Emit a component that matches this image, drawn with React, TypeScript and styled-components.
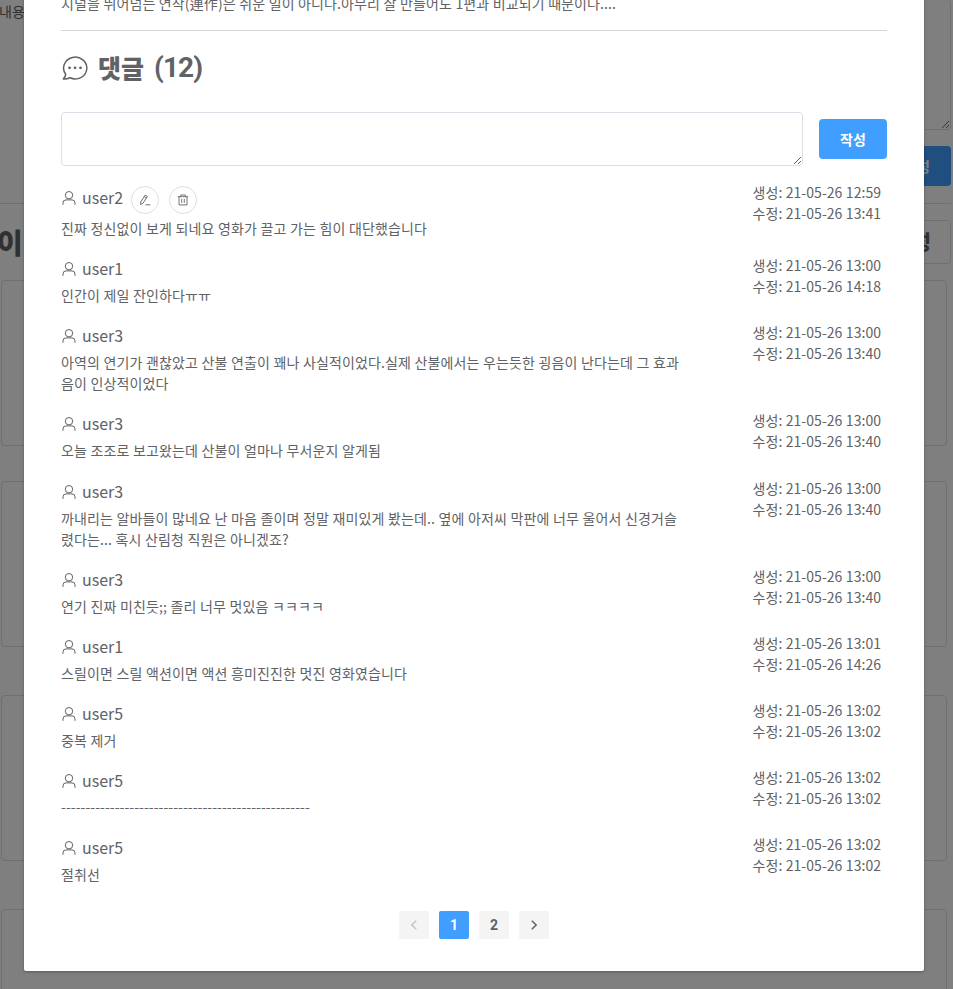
import React from 'react';
import styled, { createGlobalStyle } from 'styled-components';

const GlobalStyle = createGlobalStyle`
  * { box-sizing: border-box; }
  html, body { margin: 0; overflow: hidden; }
  body {
    font-family: "Noto Sans CJK KR", "Noto Sans KR", sans-serif;
    font-size: 14px;
    line-height: 21px;
    color: #606266;
    background: #fff;
  }
`;

const Screen = styled.div`
  position: relative;
  height: 989px;
  overflow: hidden;
`;

/* ---- page behind the dialog ---- */
const BackPage = styled.div`
  display: flex;
  flex-direction: column;
  height: 989px;
  overflow: hidden;
  padding-right: 2px;
`;
const BackField = styled.div`
  display: flex;
  height: 130px;
`;
const BackLabel = styled.span`
  width: 60px;
  flex: none;
  padding-top: 1px;
  margin-left: -1px;
`;
const BackTextarea = styled.textarea`
  flex: 1;
  height: 130px;
  border: 1px solid #dcdfe6;
  border-top: 0;
  border-radius: 4px;
  background: #fff;
  resize: vertical;
`;
const BackActions = styled.div`
  display: flex;
  justify-content: flex-end;
  padding: 16px 0 17px;
  border-bottom: 1px solid #dcdfe6;
  height: 74px;
`;
const Button = styled.button`
  width: 68px;
  height: 40px;
  flex: none;
  padding: 0;
  border: 0;
  border-radius: 4px;
  background: #409eff;
  color: #fff;
  font: 700 14px/20px "Noto Sans CJK KR", sans-serif;
`;
const BackHeading = styled.div`
  display: flex;
  justify-content: space-between;
  align-items: center;
  height: 44px;
  margin: 16px 0;
  font-size: 28px;
  font-weight: 900;
  white-space: nowrap;
`;
const BackTitle = styled.span`
  margin-left: -3px;
`;
const BackChoice = styled.span`
  height: 44px;
  width: 90px;
  padding-right: 19px;
  border: 1px solid #dcdfe6;
  border-radius: 4px;
  text-align: right;
  font-size: 20px;
  line-height: 42px;
`;
const BackCard = styled.div<{ $gap: number }>`
  flex: none;
  height: 166px;
  margin: 0 4px ${(p) => p.$gap}px 1px;
  border: 1px solid #dcdfe6;
  border-radius: 4px;
`;

/* ---- dialog ---- */
const Overlay = styled.div`
  position: absolute;
  inset: 0;
  background: rgba(0, 0, 0, 0.5);
  overflow: hidden;
`;
const Dialog = styled.section`
  width: 900px;
  height: 1011px;
  margin: -40px 0 0 24px;
  padding: 33px 37px 0;
  background: #fff;
  border-radius: 2px;
  box-shadow: 0 1px 3px rgba(0, 0, 0, 0.3);
`;
const Synopsis = styled.p`
  margin: 0;
  height: 38px;
  border-bottom: 1px solid #d6d6d6;
  letter-spacing: 0.11px;
  word-spacing: 0.22px;
`;
const Heading = styled.h2`
  display: flex;
  align-items: center;
  height: 36px;
  margin: 19px 0 26px;
  font-size: 25px;
  font-weight: 900;
`;
const HeadingText = styled.span`
  margin: -2px 10px 0 10px;
`;
const Count = styled.span`
  font: 700 28px/36px Roboto, sans-serif;
  letter-spacing: -0.9px;
`;
const Composer = styled.div`
  display: flex;
  align-items: center;
  gap: 16px;
  height: 54px;
`;
const CommentInput = styled.textarea`
  flex: 1;
  height: 54px;
  border: 1px solid #dcdfe6;
  border-radius: 4px;
  resize: vertical;
`;
const CommentList = styled.div`
  display: flex;
  flex-direction: column;
  padding-top: 16px;
`;
const Row = styled.article<{ $pad: number }>`
  display: flex;
  justify-content: space-between;
  padding-right: 6px;
  padding-bottom: ${(p) => p.$pad}px;
`;
const Body = styled.div`
  width: 625px;
`;
const Author = styled.div<{ $own: boolean }>`
  display: flex;
  align-items: center;
  height: ${(p) => (p.$own ? 32 : 26)}px;
  margin-bottom: 4px;
  padding-top: ${(p) => (p.$own ? 0 : 1)}px;
  font-size: 16px;
`;
const Name = styled.span<{ $own: boolean }>`
  margin: ${(p) => (p.$own ? '-2px' : '0')} 8px 0 5px;
`;
const RoundButton = styled.button`
  display: flex;
  align-items: center;
  justify-content: center;
  width: 28px;
  height: 28px;
  margin: 4px 10px 0 0;
  padding: 0;
  border: 1px solid #dcdfe6;
  border-radius: 50%;
  background: #fff;
  color: #606266;
`;
const Text = styled.p<{ $rule: boolean }>`
  margin: ${(p) => (p.$rule ? '-1px 0 1px' : '0')};
  white-space: pre;
  letter-spacing: ${(p) => (p.$rule ? 0.02 : 0.12)}px;
  word-spacing: 0.25px;
`;
const Dates = styled.div`
  white-space: nowrap;
  letter-spacing: 0.04px;
  word-spacing: 0.25px;
`;
const Pagination = styled.nav`
  display: flex;
  justify-content: center;
  gap: 10px;
`;
const Page = styled.button<{ $active?: boolean; $off?: boolean }>`
  display: flex;
  align-items: center;
  justify-content: center;
  width: 30px;
  height: 28px;
  padding: 0 0 1px;
  border: 0;
  border-radius: 2px;
  background: ${(p) => (p.$active ? '#409eff' : '#f4f4f5')};
  color: ${(p) => (p.$active ? '#fff' : p.$off ? '#c0c4cc' : '#606266')};
  font: 700 14px/26px Roboto, sans-serif;
`;
const Icon = styled.svg`
  flex: none;
  fill: none;
  stroke: currentColor;
`;

const ChatIcon = () => (
  <Icon width="27" height="26" viewBox="-1 0 27 26" strokeWidth="1.5" strokeLinejoin="round">
    <path d="M3.7 19.3A11.6 10.9 0 1 1 8 22.8C5.8 23.8 3.6 24.2 1.3 24C2.9 22.4 3.7 21 3.7 19.3Z" />
    <g fill="currentColor" stroke="none">
      <circle cx="7.6" cy="12.8" r="1.4" />
      <circle cx="13" cy="12.8" r="1.4" />
      <circle cx="18.5" cy="12.8" r="1.4" />
    </g>
  </Icon>
);
const UserIcon = () => (
  <Icon width="16" height="16" viewBox="0 0 16 16" strokeWidth="1">
    <circle cx="8" cy="5.2" r="3.7" />
    <path d="M2 14.8v-1.9a3 3 0 0 1 3-3h6a3 3 0 0 1 3 3v1.9" />
  </Icon>
);
const EditIcon = () => (
  <Icon width="12" height="12" viewBox="0 0 12 12" strokeWidth="0.9">
    <path d="M6.1 1.1L8.4 2.4 4.1 9.2 1.6 10.5 1.8 7.9ZM5.2 2.6L7.5 4M6.4 10.8H11.4" />
  </Icon>
);
const TrashIcon = () => (
  <Icon width="12" height="12" viewBox="0 0 12 12" strokeWidth="0.9">
    <path d="M.8 2.7H11.2M3.7 2.5V1H8.3V2.5M2 2.7V10.9H10V2.7M4.7 4.9V8.8M7.3 4.9V8.8" />
  </Icon>
);
const Chevron = ({ right }: { right?: boolean }) => (
  <Icon width="12" height="12" viewBox="0 0 12 12" strokeWidth="1.5">
    <path d={right ? 'M3.8 1.7L8.2 6 3.8 10.3' : 'M8.2 1.7L3.8 6 8.2 10.3'} />
  </Icon>
);

interface Comment {
  user: string;
  text: string;
  created: string;
  edited: string;
  own?: boolean;
  pad?: number;
}

const comments: Comment[] = [
  { user: 'user2', text: '진짜 정신없이 보게 되네요 영화가 끌고 가는 힘이 대단했습니다', created: '12:59', edited: '13:41', own: true },
  { user: 'user1', text: '인간이 제일 잔인하다ㅠㅠ', created: '13:00', edited: '14:18' },
  { user: 'user3', text: '아역의 연기가 괜찮았고 산불 연출이 꽤나 사실적이었다.실제 산불에서는 우는듯한 굉음이 난다는데 그 효과\n음이 인상적이었다', created: '13:00', edited: '13:40' },
  { user: 'user3', text: '오늘 조조로 보고왔는데 산불이 얼마나 무서운지 알게됨', created: '13:00', edited: '13:40', pad: 17 },
  { user: 'user3', text: '까내리는 알바들이 많네요 난 마음 졸이며 정말 재미있게 봤는데.. 옆에 아저씨 막판에 너무 울어서 신경거슬\n렸다는... 혹시 산림청 직원은 아니겠죠?', created: '13:00', edited: '13:40' },
  { user: 'user3', text: '연기 진짜 미친듯;; 졸리 너무 멋있음 ㅋㅋㅋㅋ', created: '13:00', edited: '13:40' },
  { user: 'user1', text: '스릴이면 스릴 액션이면 액션 흥미진진한 멋진 영화였습니다', created: '13:01', edited: '14:26' },
  { user: 'user5', text: '중복 제거', created: '13:02', edited: '13:02' },
  { user: 'user5', text: '---------------------------------------------------', created: '13:02', edited: '13:02' },
  { user: 'user5', text: '절취선', created: '13:02', edited: '13:02', pad: 26 },
];

export default function App() {
  return (
    <Screen>
      <GlobalStyle />
      <BackPage>
        <BackField>
          <BackLabel>내용</BackLabel>
          <BackTextarea />
        </BackField>
        <BackActions>
          <Button>작성</Button>
        </BackActions>
        <BackHeading>
          <BackTitle>이</BackTitle>
          <BackChoice>작성</BackChoice>
        </BackHeading>
        <BackCard $gap={35} />
        <BackCard $gap={48} />
        <BackCard $gap={48} />
        <BackCard $gap={0} />
      </BackPage>
      <Overlay>
        <Dialog>
          <Synopsis>지널을 뛰어넘는 연작(連作)은 쉬운 일이 아니다.아무리 잘 만들어도 1편과 비교되기 때문이다....</Synopsis>
          <Heading>
            <ChatIcon />
            <HeadingText>댓글</HeadingText>
            <Count>(12)</Count>
          </Heading>
          <Composer>
            <CommentInput />
            <Button>작성</Button>
          </Composer>
          <CommentList>
            {comments.map((c, i) => (
              <Row key={i} $pad={c.pad ?? 16}>
                <Body>
                  <Author $own={!!c.own}>
                    <UserIcon />
                    <Name $own={!!c.own}>{c.user}</Name>
                    {c.own && (
                      <>
                        <RoundButton><EditIcon /></RoundButton>
                        <RoundButton><TrashIcon /></RoundButton>
                      </>
                    )}
                  </Author>
                  <Text $rule={c.text.startsWith('---')}>{c.text}</Text>
                </Body>
                <Dates>
                  <div>생성: 21-05-26 {c.created}</div>
                  <div>수정: 21-05-26 {c.edited}</div>
                </Dates>
              </Row>
            ))}
          </CommentList>
          <Pagination>
            <Page $off><Chevron /></Page>
            <Page $active>1</Page>
            <Page>2</Page>
            <Page><Chevron right /></Page>
          </Pagination>
        </Dialog>
      </Overlay>
    </Screen>
  );
}
